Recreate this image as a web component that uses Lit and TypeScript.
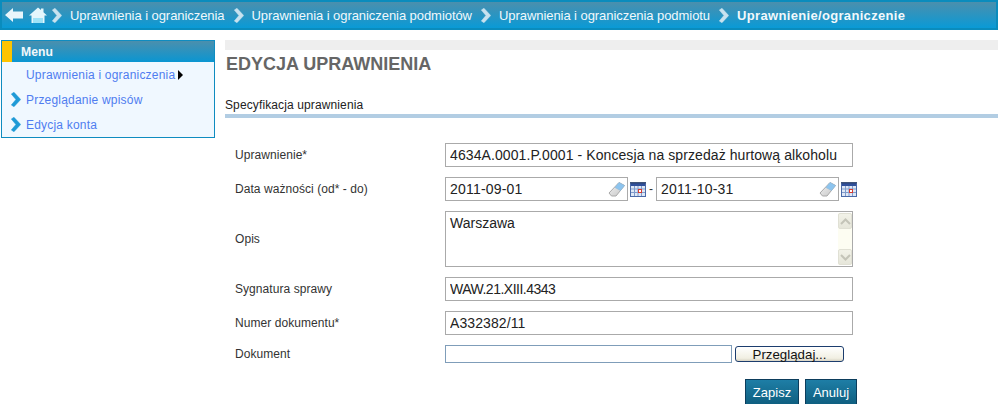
import { LitElement, html, css } from "lit";
import { customElement } from "lit/decorators.js";

const chevron = (cls: string) => html`<svg class=${cls} viewBox="0 0 10 15" width="10" height="15"><path d="M0.3 2 L3 0.3 L9.7 7.5 L3 14.7 L0.3 13 L4.9 7.5 Z" fill="currentColor" stroke="currentColor" stroke-width="0.5" stroke-linejoin="round"/></svg>`;

const eraser = html`<svg class="eraser" width="18" height="17" viewBox="0 0 18 17">
  <defs><linearGradient id="er" x1="0" y1="0" x2="1" y2="1"><stop offset="0" stop-color="#f4f4f4"/><stop offset="1" stop-color="#c4c4c4"/></linearGradient></defs>
  <path d="M11 1.5 L16.5 4.5 L8 15 L3.5 15 L1 12 Z" fill="url(#er)" stroke="#a9a9a9" stroke-width="1" stroke-linejoin="round"/>
  <path d="M11 1.5 L16.5 4.5 L12.5 9.5 L7 6.5 Z" fill="#8cc4ef" stroke="#8fb8d8" stroke-width="0.6"/>
</svg>`;

const calendar = html`<svg class="cal" width="16" height="16" viewBox="0 0 16 16">
  <rect x="0.5" y="1.5" width="15" height="14" fill="#dfe8f6" stroke="#4a6aa8"/>
  <rect x="1" y="2" width="14" height="3" fill="#2f4f9a"/>
  <path d="M1 1 V2.5 M3 1 V2.5 M5 1 V2.5 M7 1 V2.5 M9 1 V2.5 M11 1 V2.5 M13 1 V2.5 M15 1 V2.5" stroke="#333" stroke-width="0.8"/>
  <path d="M4.5 5 V15 M8 5 V15 M11.5 5 V15 M1 8 H15 M1 11.5 H15" stroke="#7f9bcb" stroke-width="1"/>
  <rect x="8.5" y="8.5" width="3" height="3" fill="#fff" stroke="#d83a2e"/>
</svg>`;

const crumbs = ["Uprawnienia i ograniczenia", "Uprawnienia i ograniczenia podmiotów", "Uprawnienia i ograniczenia podmiotu"];

@customElement("app-root")
export class AppRoot extends LitElement {
  static styles = css`
    :host { display: block; width: 998px; height: 404px; overflow: hidden; background: #fff; font-family: "Liberation Sans", Arial, sans-serif; font-size: 12px; color: #222; }
    * { box-sizing: border-box; }
    .crumbs { height: 30px; border: 2px solid #0a8cbd; background: linear-gradient(#4b8fad, #0a9ad6); display: flex; align-items: center; color: #f2f8fb; font-size: 13px; letter-spacing: -0.06px; padding-left: 3px; }
    .crumbs svg { flex: none; }
    .back { margin-right: 6px; }
    .home { margin-right: 5px; }
    .crumbs .sep { margin: 0 8px 0 9px; color: #c8e2ef; }
    .crumbs .sep.first { margin-left: 0; }
    .crumbs .cur { font-weight: bold; letter-spacing: 0.33px; }
    .page { display: flex; align-items: flex-start; padding-top: 10px; }
    .side { width: 214px; margin-left: 1px; margin-right: 10px; flex: none; border: 1px solid #0f8cc0; background: #f0f8ff; height: 98px; }
    .side-h { height: 21px; background: linear-gradient(#4b8fad, #0a96d2); color: #f2f8fb; font-weight: bold; display: flex; align-items: center; border-left: 10px solid #fdc400; padding-left: 9px; font-size: 12.2px; }
    .side ul { list-style: none; margin: 0; padding: 0; }
    .side li { height: 25px; display: flex; align-items: center; color: #4f7df0; position: relative; padding-left: 24px; font-size: 12px; letter-spacing: 0.2px; }
    .side li:first-child { padding-top: 1px; }
    .side .mark { position: absolute; left: 9px; color: #1f9ad6; top: 5px; }
    .tri { width: 0; height: 0; border: 5px solid transparent; border-left: 5px solid #000; border-right: 0; margin-left: 3px; }
    main { flex: 1; min-width: 0; }
    .bar { height: 10px; background: #eee; }
    h1 { margin: 4px 0 0 1px; font-size: 18px; line-height: 20px; font-weight: bold; color: #666; }
    .sub { margin-top: 21px; height: 23px; border-bottom: 4px solid #b2cde3; line-height: 20px; color: #222; font-size: 12px; letter-spacing: 0.12px; }
    form { margin-top: 25px; padding-left: 10px; display: grid; grid-template-columns: 210px 1fr; row-gap: 10px; align-items: center; }
    label { font-size: 12px; color: #333; letter-spacing: 0.06px; }
    input.t { height: 24px; border: 1px solid #aaa; padding: 0 0 0 4px; font: 14px "Liberation Sans", Arial, sans-serif; letter-spacing: 0.09px; color: #222; outline: none; background: #fff; margin: 0; display: block; }
    input.sig { letter-spacing: -0.5px; }
    .wide { width: 408px; }
    .dates { display: flex; align-items: center; }
    .datebox { width: 183px; height: 24px; position: relative; }
    .datebox input.t { width: 100%; letter-spacing: 0.2px; }
    .eraser { position: absolute; right: 2px; top: 4px; }
    .cal { margin-left: 2px; flex: none; }
    .dash { width: 10px; text-align: center; font-size: 12px; color: #333; }
    .ta { width: 408px; height: 56px; border: 1px solid #aaa; display: flex; }
    .ta textarea { flex: 1; border: 0; padding: 3px 4px; font: 14px "Liberation Sans", Arial, sans-serif; color: #222; resize: none; overflow: hidden; outline: none; }
    .sb { width: 14px; margin: 1px 0; background: #fdfdf2; display: flex; flex-direction: column; justify-content: space-between; flex: none; }
    .sb div { height: 16px; background: linear-gradient(#f2f2e8, #e6e6da); border: 1px solid #e0e0d4; border-radius: 2px; display: flex; align-items: center; justify-content: center; }
    .file { display: flex; align-items: center; }
    .file .f { width: 287px; height: 18px; border: 1px solid #7f9db9; background: #fff; }
    .file .btn { width: 109px; height: 16px; margin-left: 3px; border: 1px solid #1c3d6e; border-radius: 3px; background: linear-gradient(#fff, #f1efe2 80%, #d8d4c4); font-size: 13.3px; color: #111; text-align: center; line-height: 13px; padding: 0; font-family: inherit; }
    .actions { grid-column: 1 / 3; display: flex; justify-content: flex-start; gap: 6px; margin-left: 510px; margin-top: 6px; }
    .actions button { height: 26px; border: 1px solid #0c3d5c; background: linear-gradient(#1e7ea6, #0f5f80); color: #fff; font: 13px "Liberation Sans", Arial, sans-serif; padding: 0; }
    .b1 { width: 54px; }
    .b2 { width: 52px; }
  `;

  render() {
    return html`
      <div class="crumbs">
        <svg class="back" width="18" height="16" viewBox="0 0 18 16"><path d="M0 8 L8 1 V4.5 H18 V11.5 H8 V15 Z" fill="#e8f5fb"/></svg>
        <svg class="home" width="18" height="17" viewBox="0 0 18 17"><path d="M9 0.5 L12 3 V1.5 H14.5 V5.2 L18 8.5 H15.5 V16 H2.5 V8.5 H0 Z" fill="#e4f6fc"/><rect x="4" y="11" width="10" height="5" fill="#9fe3f7"/></svg>
        ${chevron("sep first")}
        ${crumbs.map((c) => html`<span>${c}</span>${chevron("sep")}`)}
        <span class="cur">Uprawnienie/ograniczenie</span>
      </div>
      <div class="page">
        <aside class="side">
          <div class="side-h">Menu</div>
          <ul>
            <li>Uprawnienia i ograniczenia<span class="tri"></span></li>
            <li>${chevron("mark")}Przeglądanie wpisów</li>
            <li>${chevron("mark")}Edycja konta</li>
          </ul>
        </aside>
        <main>
          <div class="bar"></div>
          <h1>EDYCJA UPRAWNIENIA</h1>
          <div class="sub">Specyfikacja uprawnienia</div>
          <form>
            <label>Uprawnienie*</label>
            <input class="t wide" value="4634A.0001.P.0001 - Koncesja na sprzedaż hurtową alkoholu" />
            <label>Data ważności (od* - do)</label>
            <div class="dates">
              <div class="datebox"><input class="t" value="2011-09-01" />${eraser}</div>
              ${calendar}
              <span class="dash">-</span>
              <div class="datebox"><input class="t" value="2011-10-31" />${eraser}</div>
              ${calendar}
            </div>
            <label>Opis</label>
            <div class="ta">
              <textarea .value=${"Warszawa"}></textarea>
              <div class="sb">
                <div><svg width="11" height="7" viewBox="0 0 11 7"><path d="M1 6 L5.5 1.5 L10 6" fill="none" stroke="#c4c4b8" stroke-width="2"/></svg></div>
                <div><svg width="11" height="7" viewBox="0 0 11 7"><path d="M1 1 L5.5 5.5 L10 1" fill="none" stroke="#c4c4b8" stroke-width="2"/></svg></div>
              </div>
            </div>
            <label>Sygnatura sprawy</label>
            <input class="t wide sig" value="WAW.21.XIII.4343" />
            <label>Numer dokumentu*</label>
            <input class="t wide" value="A332382/11" />
            <label>Dokument</label>
            <div class="file"><div class="f"></div><button type="button" class="btn">Przeglądaj...</button></div>
            <div class="actions">
              <button type="button" class="b1">Zapisz</button>
              <button type="button" class="b2">Anuluj</button>
            </div>
          </form>
        </main>
      </div>
    `;
  }
}
